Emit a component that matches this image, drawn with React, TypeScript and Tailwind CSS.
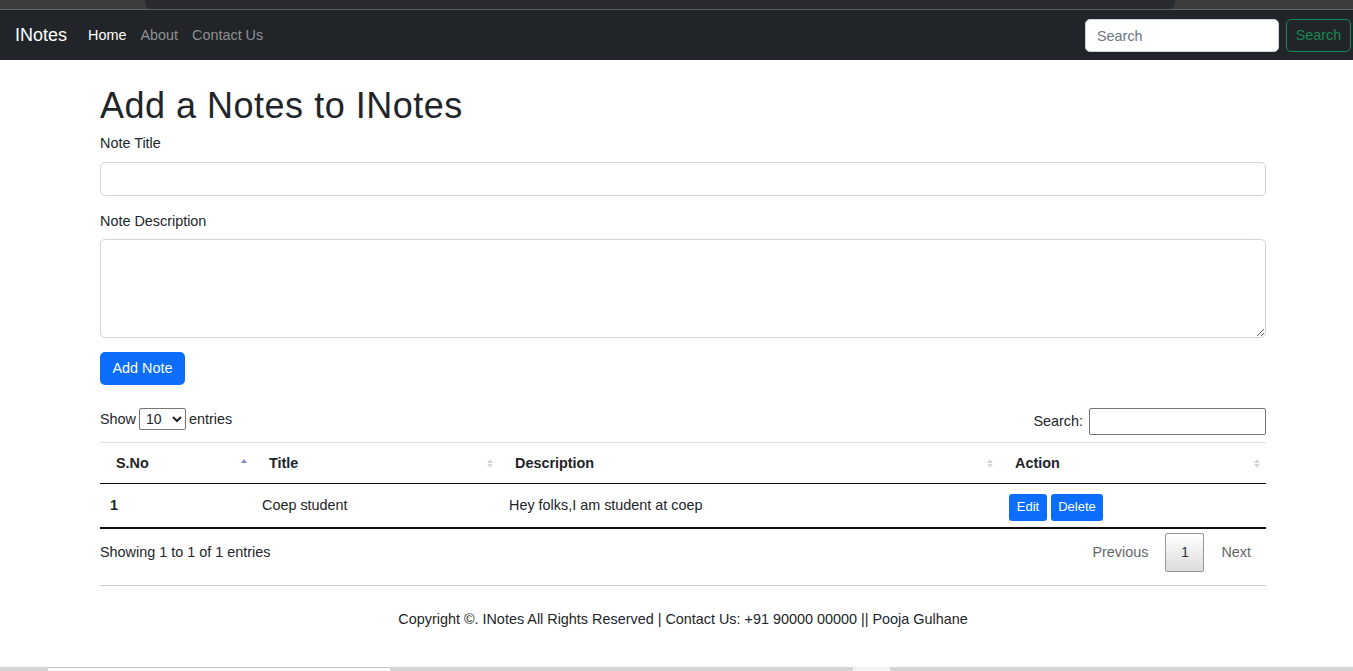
import React, { useState } from 'react';

function SortIcon({ active }: { active?: boolean }) {
  if (active) {
    return (
      <svg width="8" height="11" viewBox="0 0 8 11" className="block">
        <path d="M1 5 L4 1 L7 5 Z" fill="#8085d6" />
      </svg>
    );
  }
  return (
    <svg width="8" height="11" viewBox="0 0 8 11" className="block">
      <path d="M1 5 L4 1 L7 5 Z" fill="#d6d6d6" />
      <path d="M1 6 L4 10 L7 6 Z" fill="#d6d6d6" />
    </svg>
  );
}

export default function App() {
  const [title, setTitle] = useState('');
  const [desc, setDesc] = useState('');

  return (
    <div className="min-h-screen bg-white font-['Liberation_Sans',sans-serif] text-[14.4px] leading-[1.5] text-[#212529] flex flex-col">
      {/* browser strip */}
      <div className="h-[10px] bg-[#3c3c3c] flex border-b border-[#5f5f5f]">
        <div className="w-[145px]" />
        <div className="w-[1030px] bg-[#292a2d] rounded-bl-[6px] rounded-br-[6px]" />
      </div>

      {/* Navbar */}
      <nav className="h-[50px] bg-[#212529] flex items-center pl-[15px] pr-[2px] pt-[1px]">
        <a className="text-white text-[18px] mr-[14px]">INotes</a>
        <ul className="flex">
          <li className="px-[7px] text-white">Home</li>
          <li className="px-[7px] text-[#8e9093]">About</li>
          <li className="px-[7px] text-[#8e9093]">Contact Us</li>
        </ul>
        <form className="ml-auto flex items-center gap-[7px]">
          <input
            placeholder="Search"
            className="w-[194px] h-[33px] bg-white rounded-[5px] border border-[#ced4da] px-[11px] text-[14.4px] placeholder-[#6c757d] outline-none"
          />
          <button
            type="button"
            className="w-[65px] h-[33px] rounded-[5px] border border-[#198754] text-[#198754] text-[14.4px]"
          >
            Search
          </button>
        </form>
      </nav>

      {/* Main */}
      <div className="ml-[100px] w-[1166px] pt-[24px]">
        <h1 className="text-[36px] leading-[1.2] tracking-[0.5px] mb-[6px]">Add a Notes to INotes</h1>
        <form onSubmit={(e) => e.preventDefault()}>
          <div className="mb-[15px]">
            <label className="block mb-[7px]">Note Title</label>
            <input
              value={title}
              onChange={(e) => setTitle(e.target.value)}
              className="block w-full h-[34px] border border-[#ced4da] rounded-[5px] px-[11px] outline-none"
            />
          </div>
          <div className="mb-[14px]">
            <label className="block mb-[7px]">Note Description</label>
            <textarea
              value={desc}
              onChange={(e) => setDesc(e.target.value)}
              className="block w-full h-[99px] border border-[#ced4da] rounded-[5px] px-[11px] outline-none"
            />
          </div>
          <button className="bg-[#0d6efd] text-white rounded-[5px] w-[85px] h-[33px]">Add Note</button>
        </form>

        {/* DataTable */}
        <div className="mt-[20px]">
          <div className="flex justify-between items-center h-[28px]">
            <div className="flex items-center">
              <span>Show</span>
              <select className="mx-[3px] w-[47px] h-[22px] border border-[#767676] rounded-[2px] text-[14px] px-[2px] bg-white">
                <option>10</option>
                <option>25</option>
                <option>50</option>
                <option>100</option>
              </select>
              <span>entries</span>
            </div>
            <div className="flex items-center pt-[4px]">
              <span className="mr-[6px]">Search:</span>
              <input className="w-[177px] h-[27px] border border-[#767676] rounded-[2px] outline-none px-1" />
            </div>
          </div>

          <table className="w-full table-fixed border-collapse mt-[9px]">
            <colgroup>
              <col className="w-[153px]" />
              <col className="w-[246px]" />
              <col className="w-[500px]" />
              <col className="w-[267px]" />
            </colgroup>
            <thead>
              <tr className="border-t border-[#dee2e6] border-b border-b-[#111]">
                {[
                  ['S.No', true],
                  ['Title', false],
                  ['Description', false],
                  ['Action', false],
                ].map(([label, active]) => (
                  <th key={label as string} className="h-[41px] pl-[16px] pr-[5px] text-left font-bold">
                    <div className="flex items-center justify-between">
                      <span>{label}</span>
                      <SortIcon active={active as boolean} />
                    </div>
                  </th>
                ))}
              </tr>
            </thead>
            <tbody>
              <tr className="border-b-2 border-[#111]">
                <td className="h-[44px] pl-[10px] font-bold">1</td>
                <td className="pl-[9px]">Coep student</td>
                <td className="pl-[10px]">Hey folks,I am student at coep</td>
                <td className="pl-[10px] pt-[3px]">
                  <div className="flex gap-[4px]">
                    <button className="bg-[#0d6efd] text-white rounded-[3px] h-[27px] w-[38px] text-[13px]">Edit</button>
                    <button className="bg-[#0d6efd] text-white rounded-[3px] h-[27px] w-[52px] text-[13px]">Delete</button>
                  </div>
                </td>
              </tr>
            </tbody>
          </table>

          <div className="flex justify-between items-center mt-[4px]">
            <span>Showing 1 to 1 of 1 entries</span>
            <div className="flex items-center text-[#666] pr-[15px]">
              <span className="mr-[17px]">Previous</span>
              <span className="w-[39px] h-[39px] flex items-center justify-center border border-[#979797] rounded-[2px] bg-gradient-to-b from-white to-[#dcdcdc] text-[#333]">
                1
              </span>
              <span className="ml-[17px]">Next</span>
            </div>
          </div>
        </div>

        <hr className="mt-[13px] border-t border-[#c8c8c8]" />
        <footer className="text-center pt-[23px]">
          Copyright ©. INotes All Rights Reserved | Contact Us: +91 90000 00000 || Pooja Gulhane
        </footer>
      </div>

      <div className="mt-auto h-[4px] flex bg-[#d4d4d4]">
        <div className="w-[48px]" />
        <div className="w-[342px] bg-white border-t border-[#c3c3c3]" />
        <div className="w-[463px]" />
        <div className="w-[37px] bg-[#f2f2f2]" />
      </div>
    </div>
  );
}
